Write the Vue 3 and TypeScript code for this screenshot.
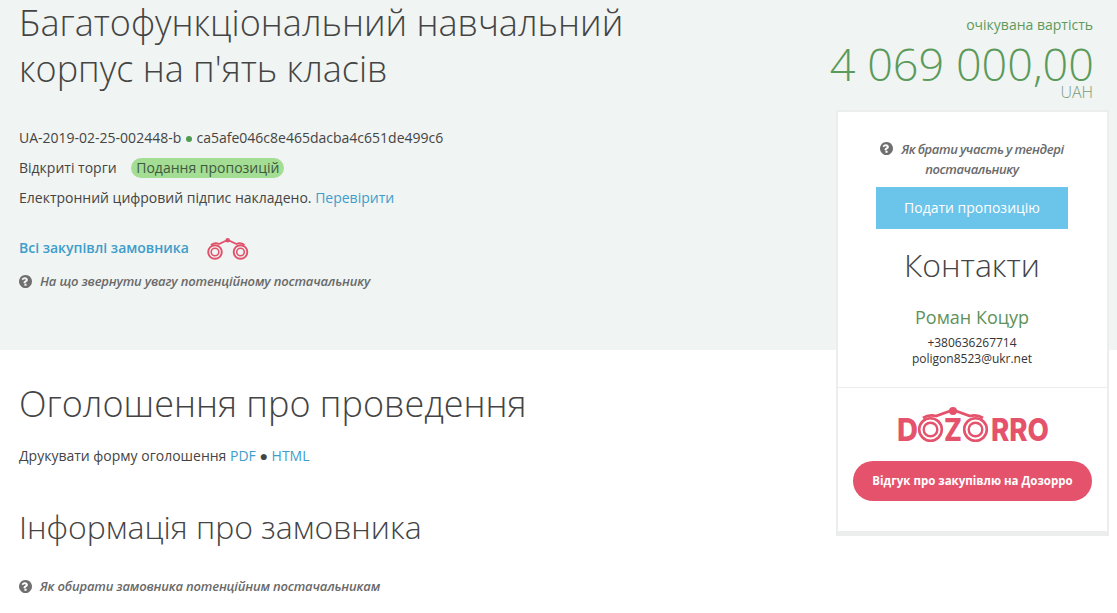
<template>
  <div class="page">
    <section class="band">
      <div class="band-left">
        <h1 class="title">Багатофункціональний навчальний корпус на п'ять класів</h1>
        <p class="row">UA-2019-02-25-002448-b <span class="dot"></span> ca5afe046c8e465dacba4c651de499c6</p>
        <p class="row">Відкриті торги <span class="status">Подання пропозицій</span></p>
        <p class="row">Електронний цифровий підпис накладено. <a class="link">Перевірити</a></p>
        <p class="buyer">
          <a class="link strong">Всі закупівлі замовника</a>
          <svg class="bino" width="44" height="24" viewBox="0 0 44 24" fill="none" stroke="#e0526c">
            <circle cx="9" cy="15" r="6.8" stroke-width="1.9" />
            <circle cx="9" cy="15" r="3.8" stroke-width="1.6" />
            <circle cx="34.5" cy="15" r="6.8" stroke-width="1.9" />
            <circle cx="34.5" cy="15" r="3.8" stroke-width="1.6" />
            <path d="M5 8Q9 5 13 7L21.7 3 30.5 7Q34.5 5 38.5 8" stroke-width="1.8" />
            <circle cx="21.7" cy="3.2" r="2.3" fill="#e0526c" stroke="none" />
          </svg>
        </p>
        <p class="hint">
          <svg class="q" viewBox="128 128 1536 1536"><path :d="questionPath" /></svg>
          <em>На що звернути увагу потенційному постачальнику</em>
        </p>
      </div>
      <div class="price">
        <div class="price-label">очікувана вартість</div>
        <div class="price-value">4 069 000,00</div>
        <div class="price-cur">UAH</div>
      </div>
    </section>

    <section class="content">
      <h2 class="heading first">Оголошення про проведення</h2>
      <p class="row">Друкувати форму оголошення <a class="link">PDF</a> ● <a class="link">HTML</a></p>
      <h2 class="heading second">Інформація про замовника</h2>
      <p class="hint low">
        <svg class="q" viewBox="128 128 1536 1536"><path :d="questionPath" /></svg>
        <em>Як обирати замовника потенційним постачальникам</em>
      </p>
    </section>

    <aside class="side">
      <div class="side-top">
        <p class="side-hint">
          <svg class="q" viewBox="128 128 1536 1536"><path :d="questionPath" /></svg>
          <em>Як брати участь у тендері постачальнику</em>
        </p>
        <a class="offer">Подати пропозицію</a>
        <h3 class="contacts">Контакти</h3>
        <div class="person">Роман Коцур</div>
        <div class="phone">+380636267714</div>
        <div class="phone">poligon8523@ukr.net</div>
      </div>
      <div class="side-bottom">
        <svg class="logo" width="156" height="50" viewBox="0 0 156 50">
          <text x="2" y="36" class="logo-text" textLength="21" lengthAdjust="spacingAndGlyphs">D</text>
          <text x="49" y="36" class="logo-text" textLength="18" lengthAdjust="spacingAndGlyphs">Z</text>
          <text x="96" y="36" class="logo-text" textLength="58" lengthAdjust="spacingAndGlyphs">RRO</text>
          <g fill="none" stroke="#e5526c">
            <circle cx="35.5" cy="24.5" r="11.3" stroke-width="2.6" />
            <circle cx="35.5" cy="24.5" r="6.8" stroke-width="2.4" />
            <circle cx="80.5" cy="24.5" r="11.3" stroke-width="2.6" />
            <circle cx="80.5" cy="24.5" r="6.8" stroke-width="2.4" />
            <path d="M28 13Q34 9 41 11L58 5 75 11Q82 9 88 13" stroke-width="2.8" />
          </g>
          <circle cx="58" cy="6" r="4" fill="#e5526c" />
        </svg>
        <a class="review">Відгук про закупівлю на Дозорро</a>
      </div>
    </aside>
  </div>
</template>

<script setup lang="ts">
// font-awesome style question-circle
const questionPath =
  'M896 128q209 0 385.5 103t279.5 279.5 103 385.5-103 385.5-279.5 279.5-385.5 103-385.5-103-279.5-279.5-103-385.5 103-385.5 279.5-279.5 385.5-103zm128 1248v-192q0-14-9-23t-23-9h-192q-14 0-23 9t-9 23v192q0 14 9 23t23 9h192q14 0 23-9t9-23zm152-672q0-88-55.5-163t-138.5-116-170-41q-243 0-371 213-15 24 8 42l132 100q7 6 19 6 16 0 25-12 53-68 86-92 34-24 86-24 48 0 85.5 26t37.5 59q0 38-20 61t-68 45q-63 28-115.5 86.5t-52.5 125.5v36q0 14 9 23t23 9h192q14 0 23-9t9-23q0-19 21.5-49.5t54.5-49.5q32-18 49-28.5t46-35 44.5-48 28-60.5 12.5-81z'
</script>

<style>
html, body { background: #fff; overflow: hidden; }
</style>

<style scoped>
.page {
  position: relative;
  height: 613px;
  overflow: hidden;
  font-family: "Open Sans", "Liberation Sans", sans-serif;
  font-size: 14px;
  color: #444;
}
.band {
  height: 350px;
  box-sizing: border-box;
  background: #f0f4f2;
  padding: 0 24px 0 19px;
  display: flex;
  justify-content: space-between;
}
.band-left { width: 640px; }
.title {
  margin: 0 0 36px;
  font-size: 36px;
  line-height: 46px;
  font-weight: 300;
  color: #444;
}
.row { margin: 0 0 10px; height: 20px; line-height: 20px; }
.dot {
  display: inline-block;
  width: 6px;
  height: 6px;
  margin: 0 1px;
  border-radius: 50%;
  background: #4f9c4f;
  vertical-align: 1px;
}
.status {
  display: inline-block;
  margin-left: 11px;
  padding: 0 5px;
  height: 20px;
  line-height: 20px;
  border-radius: 10px;
  background: #a4dd94;
  color: #3d5a3d;
  vertical-align: top;
}
.link { color: #3e9dcb; }
.strong { font-weight: 600; }
.buyer {
  margin: 27px 0 0;
  height: 24px;
  display: flex;
  align-items: center;
}
.bino { margin-left: 17px; margin-top: 3px; }
.hint {
  display: flex;
  align-items: center;
  margin: 12px 0 0;
  color: #6a6a6a;
  font-size: 13px;
  line-height: 20px;
  font-weight: 600;
}
.hint em { letter-spacing: -0.17px; }
.q {
  flex: none;
  width: 13px;
  height: 13px;
  margin-right: 8px;
  fill: #6f6f6f;
}
.price { text-align: right; padding-top: 15px; }
.price-label { color: #5e9a5e; line-height: 20px; }
.price-value {
  color: #5b9a5b;
  font-size: 45px;
  font-weight: 300;
  line-height: 48px;
  margin: 5px -1px 0 0;
}
.price-cur {
  color: #7c9a7c;
  font-size: 16px;
  font-weight: 300;
  line-height: 16px;
  margin-top: -4px;
}
.content { padding: 0 19px; }
.heading {
  margin: 0;
  font-size: 36px;
  font-weight: 300;
  line-height: 46px;
  color: #444;
}
.first { padding-top: 31px; margin-bottom: 19px; }
.second { font-size: 32px; padding-top: 28px; }
.low { margin-top: 26px; }
.side {
  position: absolute;
  left: 836px;
  top: 110px;
  width: 273px;
  height: 426px;
  box-sizing: border-box;
  background: #fff;
  border: 2px solid #eceeed;
  border-bottom-width: 5px;
  text-align: center;
}
.side-top {
  height: 276px;
  box-sizing: border-box;
  border-bottom: 1px solid #ececec;
  padding: 27px 39px 0 38px;
}
.side-hint {
  margin: 0;
  color: #6a6a6a;
  font-size: 13px;
  font-weight: 600;
  line-height: 20px;
}
.side-hint em { letter-spacing: -0.4px; word-spacing: -0.5px; }
.side-hint .q { display: inline-block; vertical-align: -1px; }
.offer {
  display: block;
  height: 42px;
  line-height: 42px;
  margin-top: 8px;
  background: #6bc4ea;
  color: #fff;
}
.contacts {
  margin: 13px 0 0;
  font-size: 32px;
  font-weight: 300;
  line-height: 46px;
  color: #444;
}
.person {
  margin-top: 17px;
  margin-bottom: 6px;
  font-size: 18px;
  line-height: 24px;
  color: #5e9258;
}
.phone { font-size: 12px; line-height: 16px; color: #333; }
.side-bottom { padding: 17px 15px 0; }
.logo { display: block; margin: 0 auto; }
.logo-text {
  font-family: "Inter", "Open Sans", sans-serif;
  font-weight: 800;
  font-size: 31px;
  fill: #e5526c;
}
.review {
  display: block;
  height: 40px;
  line-height: 40px;
  margin-top: 6px;
  border-radius: 20px;
  background: #e5526c;
  color: #fff;
  font-size: 11.5px;
  font-weight: 700;
}
</style>
